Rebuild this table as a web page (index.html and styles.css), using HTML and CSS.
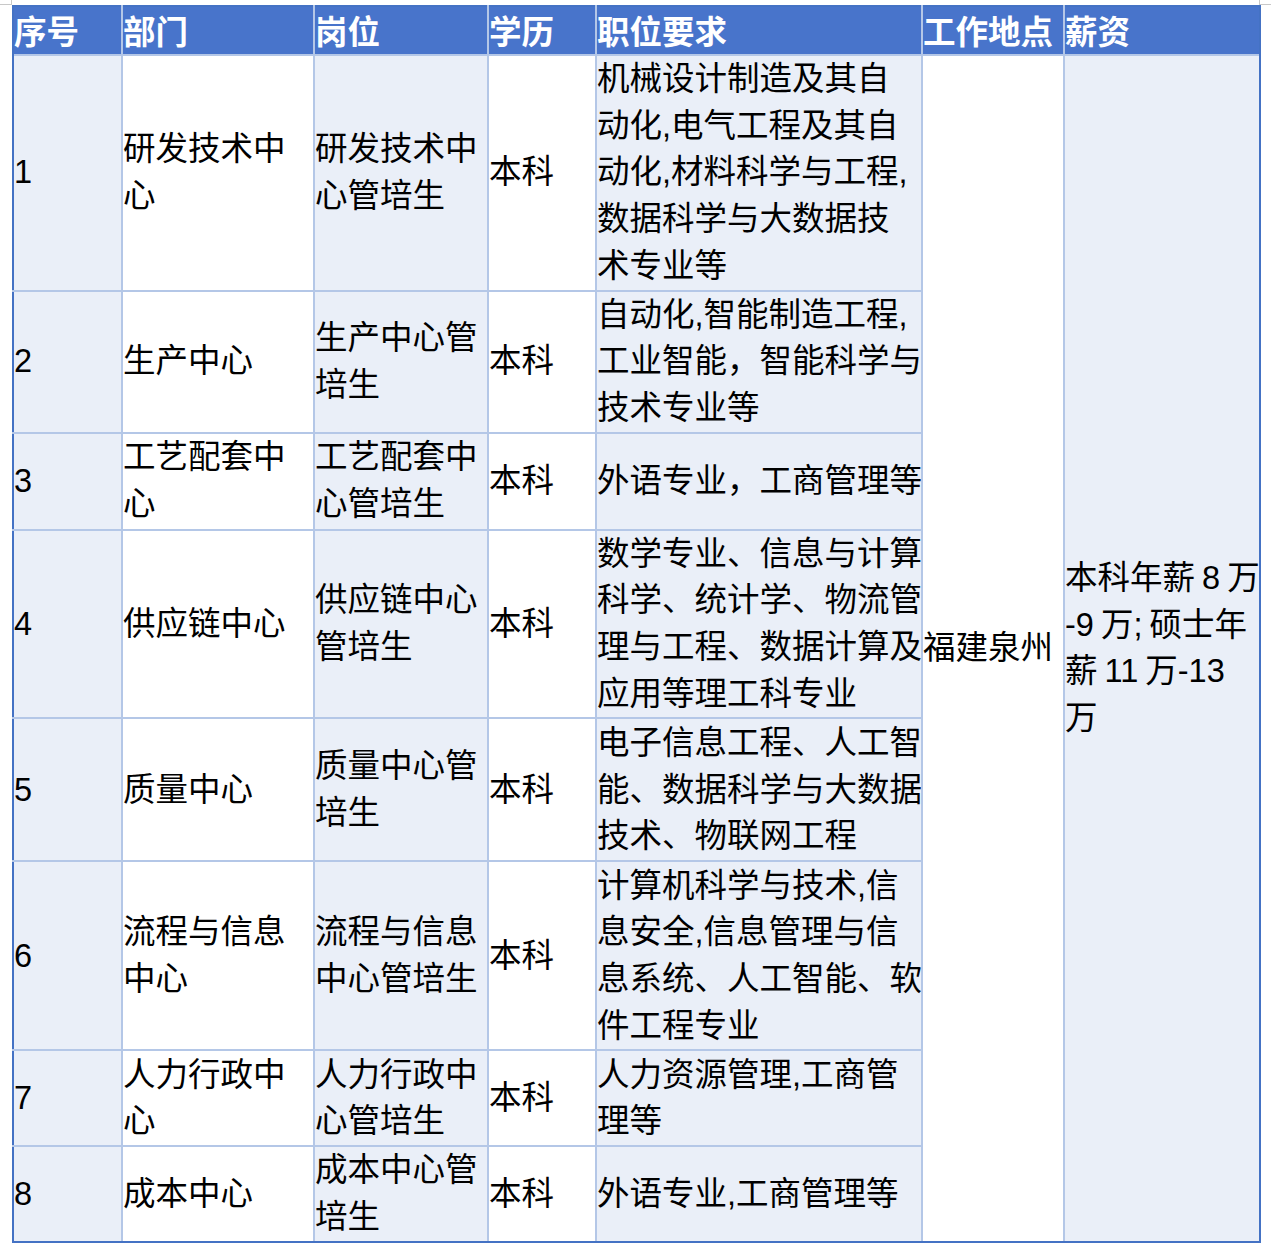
FILE: index.html
```html
<!DOCTYPE html>
<html lang="zh-CN">
<head>
<meta charset="utf-8">
<title>招聘岗位</title>
<link rel="stylesheet" href="styles.css">
</head>
<body>
<div class="sheet">
  <span class="handle handle-left"></span>
  <span class="handle handle-right"></span>
  <table class="jobs">
    <colgroup>
      <col class="c1"><col class="c2"><col class="c3"><col class="c4"><col class="c5"><col class="c6"><col class="c7">
    </colgroup>
    <thead>
      <tr class="head">
        <th>序号</th><th>部门</th><th>岗位</th><th>学历</th><th>职位要求</th><th>工作地点</th><th>薪资</th>
      </tr>
    </thead>
    <tbody>
      <tr class="r1">
        <td class="band">1</td>
        <td>研发技术中<br>心</td>
        <td class="band">研发技术中<br>心管培生</td>
        <td>本科</td>
        <td class="band">机械设计制造及其自<br>动化,电气工程及其自<br>动化,材料科学与工程,<br>数据科学与大数据技<br>术专业等</td>
        <td rowspan="8" class="place">福建泉州</td>
        <td rowspan="8" class="band salary">本科年薪 8 万<br>-9 万; 硕士年<br>薪 11 万-13<br>万</td>
      </tr>
      <tr class="r2">
        <td class="band">2</td>
        <td>生产中心</td>
        <td class="band">生产中心管<br>培生</td>
        <td>本科</td>
        <td class="band">自动化,智能制造工程,<br>工业智能，智能科学与<br>技术专业等</td>
      </tr>
      <tr class="r3">
        <td class="band">3</td>
        <td>工艺配套中<br>心</td>
        <td class="band">工艺配套中<br>心管培生</td>
        <td>本科</td>
        <td class="band">外语专业，工商管理等</td>
      </tr>
      <tr class="r4">
        <td class="band">4</td>
        <td>供应链中心</td>
        <td class="band">供应链中心<br>管培生</td>
        <td>本科</td>
        <td class="band">数学专业、信息与计算<br>科学、统计学、物流管<br>理与工程、数据计算及<br>应用等理工科专业</td>
      </tr>
      <tr class="r5">
        <td class="band">5</td>
        <td>质量中心</td>
        <td class="band">质量中心管<br>培生</td>
        <td>本科</td>
        <td class="band">电子信息工程、人工智<br>能、数据科学与大数据<br>技术、物联网工程</td>
      </tr>
      <tr class="r6">
        <td class="band">6</td>
        <td>流程与信息<br>中心</td>
        <td class="band">流程与信息<br>中心管培生</td>
        <td>本科</td>
        <td class="band">计算机科学与技术,信<br>息安全,信息管理与信<br>息系统、人工智能、软<br>件工程专业</td>
      </tr>
      <tr class="r7">
        <td class="band">7</td>
        <td>人力行政中<br>心</td>
        <td class="band">人力行政中<br>心管培生</td>
        <td>本科</td>
        <td class="band">人力资源管理,工商管<br>理等</td>
      </tr>
      <tr class="r8">
        <td class="band">8</td>
        <td>成本中心</td>
        <td class="band">成本中心管<br>培生</td>
        <td>本科</td>
        <td class="band">外语专业,工商管理等</td>
      </tr>
    </tbody>
  </table>
</div>
</body>
</html>
```

FILE: styles.css
```css
html, body {
  margin: 0;
  padding: 0;
  background: #ffffff;
}

.sheet {
  position: relative;
  padding: 5px 0 0 12px;
  width: 1248px;
}

.handle {
  position: absolute;
  top: 0;
  width: 12px;
  height: 5px;
  box-sizing: border-box;
}
.handle-left {
  left: 0;
  border-bottom: 1px solid #c8c8c8;
  border-right: 1px solid #c8c8c8;
}
.handle-right {
  left: 1259px;
  border-bottom: 1px solid #c8c8c8;
  border-left: 1px solid #c8c8c8;
}

.jobs {
  border-collapse: collapse;
  table-layout: fixed;
  width: 1247px;
  font-family: "Liberation Sans", "Noto Sans CJK SC", sans-serif;
  font-size: 32.5px;
  line-height: 46.7px;
  color: #000000;
  border: 2px solid #4472c4;
}

.c1 { width: 109px; }
.c2 { width: 192px; }
.c3 { width: 174px; }
.c4 { width: 108px; }
.c5 { width: 326px; }
.c6 { width: 142px; }
.c7 { width: 196px; }

.jobs th,
.jobs td {
  padding: 0;
  text-align: left;
  vertical-align: middle;
  white-space: nowrap;
  overflow: hidden;
}

.jobs th {
  background: #4874cb;
  color: #ffffff;
  font-weight: 700;
  line-height: 42px;
  border-left: 2px solid #b4c7e7;
  border-right: 2px solid #b4c7e7;
  border-top: none;
  border-bottom: none;
  padding-top: 5px;
}

.jobs td {
  border: 2px solid #b4c7e7;
  background: #ffffff;
}

.jobs td.band {
  background: #eaeff8;
}

.jobs td.salary {
  word-spacing: -2px;
}

.jobs tr > :first-child { border-left-color: #4472c4; }
.jobs tr > td.salary,
.jobs thead th:last-child { border-right-color: #4472c4; }
.jobs tr.r8 td,
.jobs td.place,
.jobs td.salary { border-bottom-color: #4472c4; }

.head { height: 47px; }
.r1 { height: 235px; }
.r2 { height: 142px; }
.r3 { height: 97px; }
.r4 { height: 188px; }
.r5 { height: 143px; }
.r6 { height: 189px; }
.r7 { height: 96px; }
.r8 { height: 94px; }
```
